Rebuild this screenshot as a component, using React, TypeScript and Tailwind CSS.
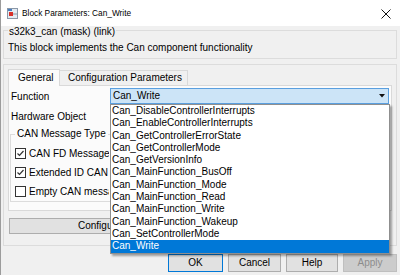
import React from "react";

const items = [
  "Can_DisableControllerInterrupts",
  "Can_EnableControllerInterrupts",
  "Can_GetControllerErrorState",
  "Can_GetControllerMode",
  "Can_GetVersionInfo",
  "Can_MainFunction_BusOff",
  "Can_MainFunction_Mode",
  "Can_MainFunction_Read",
  "Can_MainFunction_Write",
  "Can_MainFunction_Wakeup",
  "Can_SetControllerMode",
  "Can_Write",
];

function Check({ checked, label }: { checked: boolean; label: string }) {
  return (
    <div className="flex h-[19px] items-center pl-[4px]">
      <div className="flex h-[11px] w-[11px] shrink-0 items-center justify-center border border-[#333333] bg-white">
        {checked && (
          <svg width="9" height="9" viewBox="0 0 9 9">
            <path d="M1.5 4.5 L3.5 6.5 L7.5 2" fill="none" stroke="#333" strokeWidth="1.2" />
          </svg>
        )}
      </div>
      <span className="ml-[3px] w-[80px] overflow-hidden whitespace-nowrap leading-[12px]">{label}</span>
    </div>
  );
}

export default function App() {
  return (
    <div className="relative h-[275px] w-[400px] overflow-hidden bg-[#f0f0f0] font-['Liberation_Sans',Arial,sans-serif] text-[10px] text-black shadow-[inset_1px_0_0_#9c9c9c]">
      {/* title bar */}
      <div className="flex h-[26px] items-center bg-white pt-[1px] shadow-[inset_1px_0_0_#9c9c9c]">
        <svg className="ml-[7px]" width="11" height="11" viewBox="0 0 11 11">
          <rect x="0.5" y="0.5" width="10" height="10" fill="#e4ebf2" stroke="#8a98a8" />
          <rect x="1" y="1" width="4" height="2" fill="#4a7fc0" />
          <rect x="2" y="4" width="4" height="4" fill="#d8312b" />
          <line x1="6" y1="6" x2="10" y2="6" stroke="#8a98a8" />
        </svg>
        <span className="ml-[4px] text-[8.3px] leading-none">Block Parameters: Can_Write</span>
        <svg className="ml-auto mr-[9px]" width="10" height="10" viewBox="0 0 10 10">
          <path d="M0.5 0.5 L9.5 9.5 M9.5 0.5 L0.5 9.5" stroke="#111" strokeWidth="1" />
        </svg>
      </div>

      {/* mask group */}
      <div className="mx-[3px] mt-[4px] h-[29px] border border-[#dcdcdc]">
        <div className="-mt-[5px] ml-[4px] w-fit bg-[#f0f0f0] px-[1px] leading-[12px]">
          s32k3_can (mask) (link)
        </div>
        <div className="mt-[4px] pl-[4px] leading-[12px]">
          This block implements the Can component functionality
        </div>
      </div>

      {/* parameters group */}
      <div className="mx-[3px] mt-[5px] h-[182px] border border-[#dcdcdc] pt-[4px]">
        {/* tabs */}
        <div className="flex items-end pl-[4px]">
          <div className="relative z-10 flex h-[17px] w-[52px] items-center border border-b-0 border-[#d9d9d9] bg-[#fbfbfb] pl-[9px] leading-[12px]">
            General
          </div>
          <div className="mb-[1px] flex h-[15px] w-[128px] items-center border border-l-0 border-b-0 border-[#d9d9d9] bg-[#f0f0f0] pl-[8px] leading-[12px]">
            Configuration Parameters
          </div>
        </div>
        <div className="mx-[4px] -mt-[1px] h-[126px] border border-[#d9d9d9] bg-[#fbfbfb] pt-[2px]">
          <div className="flex h-[16px] items-center">
            <span className="w-[101px] pl-[2px] pt-[1px] leading-[12px]">Function</span>
            <div className="flex h-[16px] w-[279px] items-center border border-[#5a9fdf] bg-[#cce4f7] pl-[2px]">
              <span className="leading-[12px]">Can_Write</span>
              <svg className="ml-auto mr-[3px]" width="6" height="4" viewBox="0 0 6 4">
                <path d="M0 0 H6 L3 3.5 Z" fill="#111" />
              </svg>
            </div>
          </div>
          <div className="mt-[4px] flex h-[16px] items-center">
            <span className="w-[101px] pl-[2px] pt-[1px] leading-[12px]">Hardware Object</span>
            <div className="h-[16px] w-[279px] border border-[#adadad] bg-[#e1e1e1]" />
          </div>
          <div className="ml-[1px] mt-[10px] h-[68px] w-[372px] border border-[#dcdcdc]">
            <div className="-mt-[7px] ml-[4px] w-fit bg-[#fbfbfb] px-[2px] leading-[12px]">
              CAN Message Type
            </div>
            <div className="mt-[4px]">
              <Check checked label="CAN FD Message" />
              <Check checked label="Extended ID CAN Message" />
              <Check checked={false} label="Empty CAN message" />
            </div>
          </div>
        </div>
        <div className="ml-[5px] mt-[7px] flex h-[16px] w-[381px] items-center border border-[#adadad] bg-[#e1e1e1] pl-[68px]">
          <span className="w-[32px] overflow-hidden whitespace-nowrap leading-[12px]">Configure Hardware Object</span>
        </div>
      </div>

      {/* bottom buttons */}
      <div className="mt-[8px] flex justify-end gap-[5px] pr-[3px]">
        <div className="flex h-[18px] w-[55px] items-center justify-center border border-[#0078d7] bg-[#e1e1e1] leading-[12px]">
          OK
        </div>
        <div className="flex h-[18px] w-[53px] items-center justify-center border border-[#adadad] bg-[#e1e1e1] leading-[12px]">
          Cancel
        </div>
        <div className="flex h-[18px] w-[52px] items-center justify-center border border-[#adadad] bg-[#e1e1e1] leading-[12px]">
          Help
        </div>
        <div className="flex h-[18px] w-[54px] items-center justify-center border border-[#bfbfbf] bg-[#cccccc] leading-[12px] text-[#8c8c8c]">
          Apply
        </div>
      </div>

      {/* open dropdown list */}
      <div className="absolute left-[110px] top-[104px] h-[150px] w-[280px] border border-[#8f8f8f] bg-white shadow-[2px_2px_2px_rgba(0,0,0,0.35)]">
        {items.map((it, i) => (
          <div
            key={it}
            className={
              i === items.length - 1
                ? "h-[12.3px] whitespace-nowrap bg-[#0078d7] pl-[1px] leading-[12.3px] text-white"
                : "h-[12.3px] whitespace-nowrap pl-[1px] leading-[12.3px]"
            }
          >
            {it}
          </div>
        ))}
      </div>
    </div>
  );
}
